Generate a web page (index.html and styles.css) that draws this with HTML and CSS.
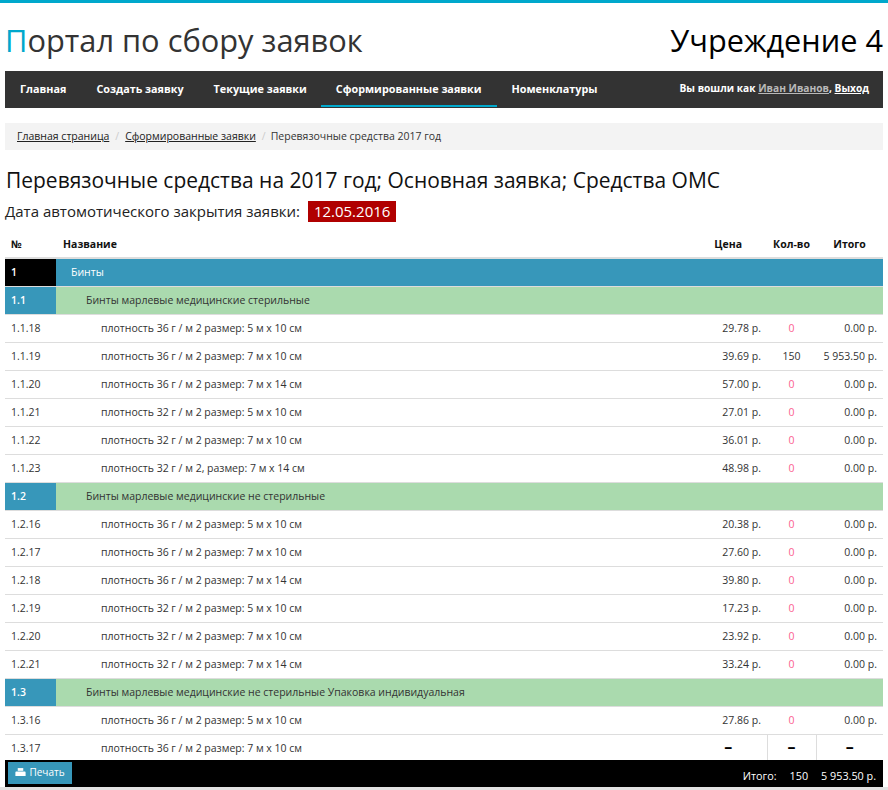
FILE: index.html
```html
<!DOCTYPE html>
<html>
  <head>
    <meta charset="utf-8" />
    <link rel="stylesheet" href="styles.css">
  </head>
  <body>
    <div class="page">
      <div class="site-header">
        <div class="logo"><span class="logo-first">П</span>ортал по сбору заявок</div>
        <div class="org-name">Учреждение 4</div>
      </div>

      <div class="navbar">
        <a class="nav-item">Главная</a>
        <a class="nav-item">Создать заявку</a>
        <a class="nav-item">Текущие заявки</a>
        <a class="nav-item active">Сформированные заявки</a>
        <a class="nav-item">Номенклатуры</a>
        <div class="nav-user">Вы вошли как <a class="user-link">Иван Иванов</a>, <a class="logout-link">Выход</a></div>
      </div>

      <div class="breadcrumb">
        <a>Главная страница</a>
        <span class="crumb-sep">/</span>
        <a>Сформированные заявки</a>
        <span class="crumb-sep">/</span>
        <span class="crumb-current">Перевязочные средства 2017 год</span>
      </div>

      <h1 class="order-title">Перевязочные средства на 2017 год; Основная заявка; Средства ОМС</h1>
      <div class="order-date">Дата автомотического закрытия заявки: <span class="date-badge">12.05.2016</span></div>

      <table class="order-table">
        <colgroup>
          <col class="col-num" />
          <col />
          <col class="col-price" />
          <col class="col-qty" />
          <col class="col-total" />
        </colgroup>
        <thead>
          <tr>
            <th>№</th>
            <th class="head-name">Название</th>
            <th class="head-price">Цена</th>
            <th class="center">Кол-во</th>
            <th class="center">Итого</th>
          </tr>
        </thead>
        <tbody>
          <tr class="group-row">
            <td class="group-num">1</td>
            <td colspan="4" class="group-name">Бинты</td>
          </tr>
          <tr class="sub-row">
            <td class="sub-num">1.1</td>
            <td colspan="4" class="sub-name">Бинты марлевые медицинские стерильные</td>
          </tr>
          <tr><td>1.1.18</td><td class="item-name">плотность 36 г / м 2 размер: 5 м x 10 см</td><td class="price">29.78 р.</td><td class="qty zero">0</td><td class="price">0.00 р.</td></tr>
          <tr><td>1.1.19</td><td class="item-name">плотность 36 г / м 2 размер: 7 м x 10 см</td><td class="price">39.69 р.</td><td class="qty">150</td><td class="price">5 953.50 р.</td></tr>
          <tr><td>1.1.20</td><td class="item-name">плотность 36 г / м 2 размер: 7 м x 14 см</td><td class="price">57.00 р.</td><td class="qty zero">0</td><td class="price">0.00 р.</td></tr>
          <tr><td>1.1.21</td><td class="item-name">плотность 32 г / м 2 размер: 5 м x 10 см</td><td class="price">27.01 р.</td><td class="qty zero">0</td><td class="price">0.00 р.</td></tr>
          <tr><td>1.1.22</td><td class="item-name">плотность 32 г / м 2 размер: 7 м x 10 см</td><td class="price">36.01 р.</td><td class="qty zero">0</td><td class="price">0.00 р.</td></tr>
          <tr><td>1.1.23</td><td class="item-name">плотность 32 г / м 2, размер: 7 м x 14 см</td><td class="price">48.98 р.</td><td class="qty zero">0</td><td class="price">0.00 р.</td></tr>
          <tr class="sub-row">
            <td class="sub-num">1.2</td>
            <td colspan="4" class="sub-name">Бинты марлевые медицинские не стерильные</td>
          </tr>
          <tr><td>1.2.16</td><td class="item-name">плотность 36 г / м 2 размер: 5 м x 10 см</td><td class="price">20.38 р.</td><td class="qty zero">0</td><td class="price">0.00 р.</td></tr>
          <tr><td>1.2.17</td><td class="item-name">плотность 36 г / м 2 размер: 7 м x 10 см</td><td class="price">27.60 р.</td><td class="qty zero">0</td><td class="price">0.00 р.</td></tr>
          <tr><td>1.2.18</td><td class="item-name">плотность 36 г / м 2 размер: 7 м x 14 см</td><td class="price">39.80 р.</td><td class="qty zero">0</td><td class="price">0.00 р.</td></tr>
          <tr><td>1.2.19</td><td class="item-name">плотность 32 г / м 2 размер: 5 м x 10 см</td><td class="price">17.23 р.</td><td class="qty zero">0</td><td class="price">0.00 р.</td></tr>
          <tr><td>1.2.20</td><td class="item-name">плотность 32 г / м 2 размер: 7 м x 10 см</td><td class="price">23.92 р.</td><td class="qty zero">0</td><td class="price">0.00 р.</td></tr>
          <tr><td>1.2.21</td><td class="item-name">плотность 32 г / м 2 размер: 7 м x 14 см</td><td class="price">33.24 р.</td><td class="qty zero">0</td><td class="price">0.00 р.</td></tr>
          <tr class="sub-row">
            <td class="sub-num">1.3</td>
            <td colspan="4" class="sub-name">Бинты марлевые медицинские не стерильные Упаковка индивидуальная</td>
          </tr>
          <tr><td>1.3.16</td><td class="item-name">плотность 36 г / м 2 размер: 5 м x 10 см</td><td class="price">27.86 р.</td><td class="qty zero">0</td><td class="price">0.00 р.</td></tr>
          <tr class="last-row"><td>1.3.17</td><td class="item-name">плотность 36 г / м 2 размер: 7 м x 10 см</td><td class="dash dash-price">–</td><td class="dash">–</td><td class="dash">–</td></tr>
        </tbody>
      </table>

      <div class="total-bar">
        <button class="print-btn">
          <svg class="print-icon" viewBox="0 0 14 10">
            <path d="M3.5 0h7v3.5h-7z" />
            <path d="M1.5 4.5h11a1 1 0 0 1 1 1v4.5h-13v-4.5a1 1 0 0 1 1-1z" />
          </svg>
          Печать
        </button>
        <div class="total-sum">
          <span class="total-label">Итого:</span>
          <span class="total-qty">150</span>
          <span class="total-money">5 953.50 р.</span>
        </div>
      </div>
    </div>
  </body>
</html>
```

FILE: styles.css
```css
* {
  box-sizing: border-box;
}

html,
body {
  height: 100%;
}

body {
  margin: 0;
  background: #fff;
  color: #333;
  font-family: "Open Sans", sans-serif;
  font-size: 10.5px;
  overflow: hidden;
}

.page {
  height: 790px;
  padding: 0 5px;
  border-top: 3px solid #00a8cc;
  border-bottom: 3px solid #e2e2e2;
  display: flex;
  flex-direction: column;
}

.site-header {
  height: 68px;
  display: flex;
  justify-content: space-between;
  align-items: center;
  padding-top: 6px;
}

.logo {
  font-size: 30.8px;
  color: #333;
}

.logo-first {
  color: #00a8cc;
}

.org-name {
  font-size: 30.7px;
  color: #000;
}

.navbar {
  height: 37px;
  padding-bottom: 1px;
  background: #333;
  display: flex;
  align-items: stretch;
  font-size: 10.8px;
  font-weight: 700;
  color: #fff;
}

.nav-item {
  display: flex;
  align-items: center;
  padding: 0 15px 2px;
}

.nav-item.active {
  border-bottom: 2px solid #00a8cc;
  padding-bottom: 0;
  margin-left: -1px;
}

.nav-user {
  margin-left: auto;
  padding: 0 14px 2px 0;
  align-self: center;
  font-size: 10.2px;
}

.user-link {
  color: #b9b9b9;
  text-decoration: underline;
}

.logout-link {
  text-decoration: underline;
}

.breadcrumb {
  margin-top: 15px;
  height: 27px;
  background: #f3f3f3;
  padding: 0 12px 2px;
  display: flex;
  align-items: center;
  gap: 6px;
  color: #333;
}

.breadcrumb a {
  color: #222;
  text-decoration: underline;
}

.crumb-sep {
  color: #ccc;
}

.crumb-current {
  margin-left: -1px;
}

.order-title {
  margin: 16px 0 0;
  padding-left: 1px;
  font-size: 20.97px;
  font-weight: 400;
  line-height: 29px;
  color: #111;
}

.order-date {
  margin-top: 6px;
  font-size: 15px;
  line-height: 21px;
  color: #222;
}

.date-badge {
  display: inline-block;
  margin-left: 4px;
  padding: 0 6px;
  background: #b00000;
  color: #fff;
}

.order-table {
  margin-top: 6px;
  width: 100%;
  border-collapse: collapse;
  table-layout: fixed;
}

.col-num {
  width: 51px;
}

.col-price {
  width: 55px;
}

.col-qty {
  width: 49px;
}

.col-total {
  width: 67px;
}

.order-table th {
  height: 30px;
  padding: 2px 6px 0;
  text-align: left;
  font-weight: 700;
  color: #111;
  border-bottom: 2px solid #ddd;
}

.order-table th.head-name {
  padding-left: 7px;
}

.order-table th.center {
  text-align: center;
}

.order-table th.head-price {
  text-align: right;
  padding-left: 0;
  padding-right: 25px;
}

.order-table td {
  height: 28px;
  padding: 0 6px;
  border-bottom: 1px solid #ddd;
  white-space: nowrap;
}

.item-name {
  padding-left: 45px !important;
}

.price {
  text-align: right;
}

.qty {
  text-align: center;
}

.zero {
  color: #fb5f8f;
}

.group-row td {
  background: #3797ba;
  color: #fff;
}

.group-row .group-num {
  background: #000;
  font-weight: 600;
}

.group-name {
  padding-left: 15px !important;
}

.sub-row td {
  background: #aadaae;
}

.sub-row .sub-num {
  background: #3797ba;
  color: #fff;
  font-weight: 600;
}

.sub-name {
  padding-left: 30px !important;
}

.last-row td {
  height: 26px;
  padding-top: 2px;
  border-bottom: 0;
}

.last-row .dash {
  border-left: 1px solid #ddd;
  padding-top: 0;
  padding-bottom: 2px;
  text-align: center;
  font-weight: 700;
  font-size: 16px;
  color: #000;
}

.last-row .dash-price {
  border-left: 0;
  padding-right: 28px;
}

.total-bar {
  height: 27px;
  background: #000;
  color: #fff;
  display: flex;
  justify-content: space-between;
  align-items: flex-start;
  padding: 2px 7px 0 3px;
}

.print-btn {
  height: 22px;
  width: 64px;
  border: 0;
  background: #3797ba;
  color: #fff;
  font-family: inherit;
  font-size: 10px;
  display: flex;
  align-items: center;
  justify-content: center;
  gap: 3px;
  padding: 0 0 2px;
}

.print-icon {
  width: 11px;
  height: 8px;
  fill: #fff;
}

.total-sum {
  display: flex;
  gap: 13px;
  font-size: 10.8px;
  padding-top: 6px;
}
```
